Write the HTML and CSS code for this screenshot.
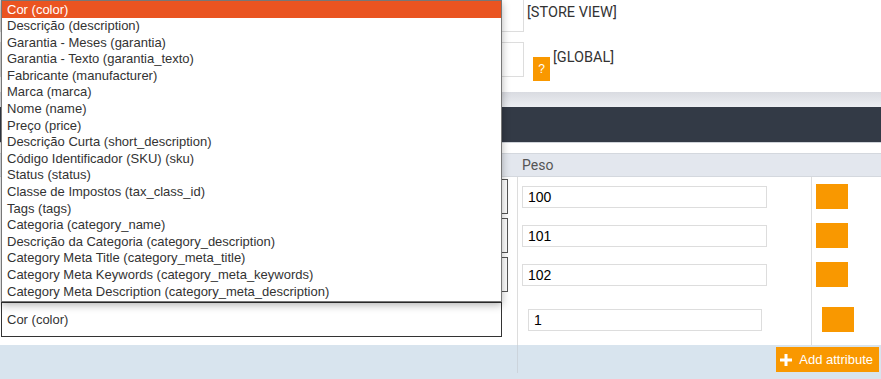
FILE: index.html
```html
<!DOCTYPE html>
<html lang="pt">
<head>
    <meta charset="UTF-8">
    <meta name="viewport" content="width=device-width, initial-scale=1.0">
    <title>Atributos</title>
    <link rel="stylesheet" href="styles.css">
</head>
<body>
    <div class="page">
        <div class="scope">
            <div class="scope-row scope-row-first">
                <div class="scope-field"></div>
                <span class="scope-label">[STORE VIEW]</span>
            </div>
            <div class="scope-row scope-row-second">
                <div class="scope-field scope-field-tall"></div>
                <span class="help-btn">?</span>
                <span class="scope-label scope-label-global">[GLOBAL]</span>
            </div>
        </div>
        <div class="shade"></div>
        <div class="section-bar"></div>
        <div class="spacer"></div>

        <div class="attr-table">
            <div class="attr-head">
                <div class="col-attr"></div>
                <div class="col-weight">Peso</div>
                <div class="col-action"></div>
            </div>

            <div class="attr-row">
                <div class="col-attr"><div class="attr-select"></div></div>
                <div class="col-weight"><input class="weight-input" type="text" value="100"></div>
                <div class="col-action"><span class="remove-btn"></span></div>
            </div>
            <div class="attr-row">
                <div class="col-attr"><div class="attr-select"></div></div>
                <div class="col-weight"><input class="weight-input" type="text" value="101"></div>
                <div class="col-action"><span class="remove-btn"></span></div>
            </div>
            <div class="attr-row">
                <div class="col-attr"><div class="attr-select"></div></div>
                <div class="col-weight"><input class="weight-input" type="text" value="102"></div>
                <div class="col-action"><span class="remove-btn"></span></div>
            </div>
            <div class="attr-row attr-row-new">
                <div class="col-attr"><div class="attr-select attr-select-open">Cor (color)</div></div>
                <div class="col-weight"><input class="weight-input" type="text" value="1"></div>
                <div class="col-action"><span class="remove-btn"></span></div>
            </div>

            <div class="attr-foot">
                <div class="col-attr"></div>
                <div class="foot-actions">
                    <button class="add-btn" type="button">
                        <svg width="12" height="12" viewBox="0 0 12 12"><path d="M4.5 0h3v4.5H12v3H7.5V12h-3V7.5H0v-3h4.5z" fill="#fff"/></svg>
                        Add attribute
                    </button>
                </div>
            </div>
        </div>

        <ul class="option-list">
            <li class="option option-active">Cor (color)</li>
            <li class="option">Descrição (description)</li>
            <li class="option">Garantia - Meses (garantia)</li>
            <li class="option">Garantia - Texto (garantia_texto)</li>
            <li class="option">Fabricante (manufacturer)</li>
            <li class="option">Marca (marca)</li>
            <li class="option">Nome (name)</li>
            <li class="option">Preço (price)</li>
            <li class="option">Descrição Curta (short_description)</li>
            <li class="option">Código Identificador (SKU) (sku)</li>
            <li class="option">Status (status)</li>
            <li class="option">Classe de Impostos (tax_class_id)</li>
            <li class="option">Tags (tags)</li>
            <li class="option">Categoria (category_name)</li>
            <li class="option">Descrição da Categoria (category_description)</li>
            <li class="option">Category Meta Title (category_meta_title)</li>
            <li class="option">Category Meta Keywords (category_meta_keywords)</li>
            <li class="option">Category Meta Description (category_meta_description)</li>
        </ul>
    </div>
</body>
</html>
```

FILE: styles.css
```css
body {
    margin: 0;
    padding: 0;
    background-color: #fff;
    font-family: "Liberation Sans", Arial, sans-serif;
    overflow: hidden;
}
.page {
    position: relative;
    width: 881px;
    height: 379px;
    overflow: hidden;
}

/* scope panel */
.scope {
    display: flow-root;
    height: 92px;
    background-color: #fff;
}
.scope-row {
    display: flex;
    align-items: flex-start;
}
.scope-row-first {
    margin-top: -2px;
    height: 34px;
}
.scope-row-second {
    margin-top: 10px;
}
.scope-field {
    box-sizing: border-box;
    width: 524px;
    height: 34px;
    border: 1px solid #ddd;
    background-color: #fff;
}
.scope-field-tall {
    height: 35px;
}
.scope-label {
    font-family: Roboto, sans-serif;
    font-size: 14.5px;
    color: #333;
    margin-left: 3px;
    margin-top: 6px;
}
.scope-label-global {
    margin-top: 7px;
}
.help-btn {
    width: 17px;
    height: 24px;
    margin-left: 9px;
    margin-top: 15px;
    background-color: #f99800;
    color: #fff;
    font-size: 12px;
    line-height: 24px;
    text-align: center;
}

.shade {
    height: 15px;
    background: linear-gradient(#d9dbe1, #eceef2);
}
.section-bar {
    height: 35px;
    background-color: #333a46;
    border-bottom: 1px solid #cfd3d9;
}
.spacer {
    height: 10px;
}

/* attribute table */
.attr-head,
.attr-row,
.attr-foot {
    display: flex;
}
.col-attr {
    box-sizing: border-box;
    width: 517px;
    flex-shrink: 0;
}
.col-weight {
    box-sizing: border-box;
    width: 294px;
    flex-shrink: 0;
}
.col-action {
    box-sizing: border-box;
    flex: 1;
}
.attr-head {
    height: 22px;
    background-color: #e3e7ee;
    border-top: 1px solid #d4d8de;
    border-bottom: 1px solid #d4d8de;
}
.attr-head .col-weight {
    padding-left: 5px;
    font-family: Roboto, sans-serif;
    font-size: 14px;
    line-height: 22px;
    color: #555;
}
.attr-row {
    height: 39px;
}
.attr-row .col-attr {
    padding: 2px 0 0 2px;
}
.attr-row .col-weight {
    border-left: 1px solid #ddd;
    padding: 9px 0 0 4px;
}
.attr-row .col-action {
    border-left: 1px solid #ddd;
    padding: 7px 0 0 4px;
}
.attr-select {
    box-sizing: border-box;
    width: 506px;
    height: 35px;
    border: 1px solid #555;
    background-color: #fff;
}
.weight-input {
    box-sizing: border-box;
    display: block;
    width: 245px;
    height: 22px;
    margin: 0;
    padding: 0 5px;
    border: 1px solid #ddd;
    font-family: "Liberation Sans", Arial, sans-serif;
    font-size: 14px;
    color: #000;
}
.remove-btn {
    display: block;
    width: 32px;
    height: 25px;
    background-color: #f99800;
}

.attr-row-new {
    height: 51px;
}
.attr-row-new .col-attr {
    padding: 8px 0 0 1px;
}
.attr-row-new .col-weight {
    padding: 15px 0 0 10px;
}
.attr-row-new .col-action {
    padding: 13px 0 0 10px;
}
.attr-row-new .weight-input {
    width: 234px;
}
.attr-select-open {
    width: 501px;
    border-color: #333;
    padding-left: 5px;
    font-size: 13px;
    line-height: 33px;
    color: #333;
}

.attr-foot {
    height: 34px;
    background-color: #d8e4ee;
}
.attr-foot .col-attr {
    border-right: 1px solid #ccd4dc;
    width: 518px;
    height: 28px;
}
.foot-actions {
    flex: 1;
    display: flex;
    justify-content: flex-end;
    align-items: flex-start;
    padding: 2px 2px 0 0;
}
.add-btn {
    display: flex;
    align-items: center;
    gap: 7px;
    height: 25px;
    padding: 0 6px 0 4px;
    border: none;
    background-color: #f99800;
    color: #fff;
    font-family: "Liberation Sans", Arial, sans-serif;
    font-size: 13px;
}

/* open select list */
.option-list {
    position: absolute;
    top: 0;
    left: 1px;
    box-sizing: border-box;
    width: 501px;
    height: 302px;
    margin: 0;
    padding: 0;
    list-style: none;
    background-color: #fff;
    border: 1px solid #777;
    box-shadow: 0 3px 8px rgba(0, 0, 0, 0.3);
}
.option {
    height: 16.6px;
    padding-left: 5px;
    font-size: 13px;
    line-height: 16.6px;
    color: #333;
    white-space: nowrap;
}
.option-active {
    height: 17px;
    line-height: 17px;
    background-color: #ea5421;
    color: #fff;
}
```
